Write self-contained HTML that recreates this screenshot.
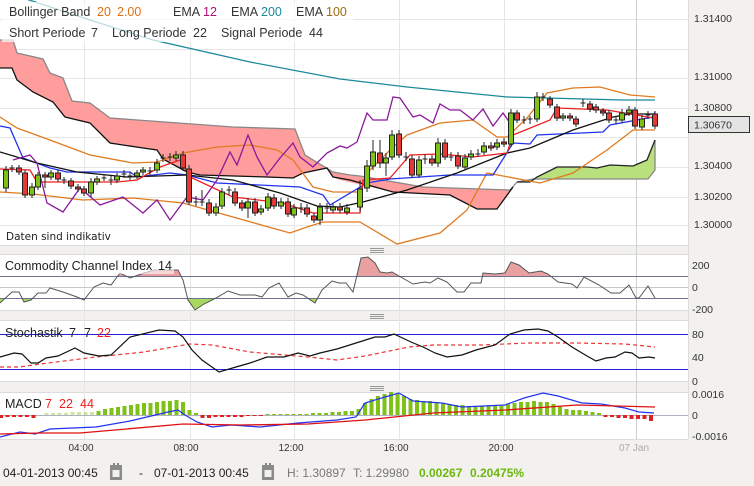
<!DOCTYPE html>
<html><head><meta charset="utf-8"><style>
html,body{margin:0;padding:0;background:#f2f1ed;}
body{width:754px;height:486px;overflow:hidden;position:relative;font-family:"Liberation Sans",sans-serif;}
svg{position:absolute;left:0;top:0;}
text{white-space:pre;}
</style></head><body>
<svg width="754" height="486" viewBox="0 0 754 486" xmlns="http://www.w3.org/2000/svg" font-family="Liberation Sans, sans-serif" xml:space="preserve">
<rect width="754" height="486" fill="#f2f1ed"/>
<rect x="0" y="0" width="688" height="245" fill="#fff"/>
<rect x="0" y="254" width="688" height="56" fill="#fff"/>
<rect x="0" y="320" width="688" height="61" fill="#fff"/>
<rect x="0" y="392" width="688" height="47" fill="#fff"/>
<g stroke="#dcdcdc" stroke-width="1">
<line x1="688.5" y1="0" x2="688.5" y2="439"/>
<line x1="0" y1="245.5" x2="688" y2="245.5"/>
<line x1="0" y1="254.5" x2="688" y2="254.5"/><line x1="0" y1="310.5" x2="688" y2="310.5"/>
<line x1="0" y1="320.5" x2="688" y2="320.5"/><line x1="0" y1="381.5" x2="688" y2="381.5"/>
<line x1="0" y1="392.5" x2="688" y2="392.5"/><line x1="0" y1="439.5" x2="688" y2="439.5"/>
</g>
<g stroke="#e6e6e6" stroke-width="1">
<line x1="0" y1="19.5" x2="688" y2="19.5"/><line x1="0" y1="49.5" x2="688" y2="49.5"/>
<line x1="0" y1="78.5" x2="688" y2="78.5"/><line x1="0" y1="108.5" x2="688" y2="108.5"/>
<line x1="0" y1="137.5" x2="688" y2="137.5"/><line x1="0" y1="167.5" x2="688" y2="167.5"/>
<line x1="0" y1="197.5" x2="688" y2="197.5"/><line x1="0" y1="225.5" x2="688" y2="225.5"/>
<line x1="84.5" y1="0" x2="84.5" y2="439"/><line x1="190.5" y1="0" x2="190.5" y2="439"/>
<line x1="294.5" y1="0" x2="294.5" y2="439"/><line x1="399.5" y1="0" x2="399.5" y2="439"/>
<line x1="504.5" y1="0" x2="504.5" y2="439"/>
</g>
<line x1="636.5" y1="0" x2="636.5" y2="439" stroke="#d0d0d0"/>
<g stroke="#999" stroke-width="1">
<line x1="370" y1="248.5" x2="384" y2="248.5"/><line x1="370" y1="250.5" x2="384" y2="250.5"/><line x1="370" y1="252.5" x2="384" y2="252.5"/>
<line x1="370" y1="314.5" x2="384" y2="314.5"/><line x1="370" y1="316.5" x2="384" y2="316.5"/><line x1="370" y1="318.5" x2="384" y2="318.5"/>
<line x1="370" y1="386.5" x2="384" y2="386.5"/><line x1="370" y1="388.5" x2="384" y2="388.5"/><line x1="370" y1="390.5" x2="384" y2="390.5"/>
</g>

<polygon fill="#ff9c9c" points="0,40 13,40 17,53 43,59 50,73 63,78 72,101 90,103 110,118 233,127 295,129 305,155 333,172 350,175 360,176 423,187 510,190 517,182 513,187 497,209 477,209 450,195 393,192 340,180 333,177 327,168 303,173 293,178 267,177 200,175 187,172 163,159 157,150 143,148 110,143 90,123 65,117 53,102 33,92 17,80 12,68 0,68"/>
<polyline fill="none" stroke="#888" stroke-width="1.3" points="0,40 13,40 17,53 43,59 50,73 63,78 72,101 90,103 110,118 233,127 295,129 305,155 333,172 350,175 360,176 423,187 510,190 517,182"/>
<polygon fill="#b8e07c" points="517,182 530,182 537,177 557,167 587,167 597,168 610,165 633,166 647,160 655,140 655,170 648,179 533,179"/>
<polyline fill="none" stroke="#888" stroke-width="1.3" points="517,182 533,179 648,179 655,170 655,140"/>
<polyline fill="none" stroke="#222" stroke-width="1.3" points="517,182 530,182 537,177 557,167 587,167 597,168 610,165 633,166 647,160 655,140"/>
<polyline fill="none" stroke="#111" stroke-width="1.3" points="0,68 12,68 17,80 33,92 53,102 65,117 90,123 110,143 143,148 157,150 163,159 187,172 200,175 267,177 293,178 303,173 327,168 333,177 350,180 393,192 450,195 477,209 497,209 513,187"/>
<polyline fill="none" stroke="#1a8a9a" stroke-width="1.3" points="20,-3 90,20 153,40 250,62 340,79 407,87 507,97 623,100 655,100"/>
<polyline fill="none" stroke="#e07a20" stroke-width="1.3" points="0,117 17,128 50,140 90,155 133,163 157,162 183,153 217,147 250,145 277,150 293,160 313,187 333,192 360,192 367,173 393,147 407,135 440,123 473,120 497,137 507,137 527,118 547,93 573,88 600,87 630,95 655,97"/>
<polyline fill="none" stroke="#e07a20" stroke-width="1.3" points="0,192 33,194 83,200 133,198 183,203 233,217 290,233 307,227 323,222 360,222 397,244 440,233 467,210 487,173 540,183 573,173 607,150 633,130 655,130"/>
<polyline fill="none" stroke="#2233ee" stroke-width="1.3" points="0,126 10,128 23,158 50,168 67,172 130,172 137,177 170,173 187,175 217,183 300,187 323,195 330,205 367,183 390,179 450,175 493,175 513,143 530,144 537,135 603,132 610,125 653,117 655,112"/>
<polyline fill="none" stroke="#111" stroke-width="1.3" points="0,152 37,163 77,172 127,177 187,175 233,180 280,193 317,206 340,207 363,202 407,190 457,173 507,153 530,148 573,130 613,117 630,114 655,114"/>
<polyline fill="none" stroke="#ee2020" stroke-width="1.3" points="0,169 30,170 37,182 117,182 137,180 160,167 180,160 190,177 233,197 283,203 313,213 340,213 360,213 363,180 390,178 410,155 440,154 473,157 507,153 513,135 550,120 557,108 607,110 653,118"/>
<polyline fill="none" stroke="#8a1a9a" stroke-width="1.3" points="13,160 30,155 37,163 47,203 63,212 80,188 100,205 123,197 143,213 157,200 170,220 187,197 203,200 217,180 230,152 237,165 248,135 257,157 267,175 280,158 293,143 300,157 313,167 327,153 340,146 347,148 357,142 367,113 373,120 387,120 393,97 400,98 413,117 420,115 433,123 440,104 450,110 460,110 473,120 483,109 493,126 503,113 510,123"/>

<g stroke="#222" stroke-width="1">
<g fill="#7ec217">
<line x1="6" y1="166" x2="6" y2="192"/><rect x="3.5" y="170" width="5" height="18"/>
<line x1="32" y1="183" x2="32" y2="198"/><rect x="29.5" y="187" width="5" height="8"/>
<line x1="38" y1="172" x2="38" y2="190"/><rect x="35.5" y="175" width="5" height="12"/>
<line x1="51" y1="170" x2="51" y2="180"/><rect x="48.5" y="173" width="5" height="4"/>
<line x1="91" y1="178" x2="91" y2="197"/><rect x="88.5" y="182" width="5" height="11"/>
<line x1="97" y1="176" x2="97" y2="185"/><rect x="94.5" y="179" width="5" height="3"/>
<line x1="117" y1="173" x2="117" y2="183"/><rect x="114.5" y="176" width="5" height="4"/>
<line x1="137" y1="170" x2="137" y2="179"/><rect x="134.5" y="173" width="5" height="3"/>
<line x1="143" y1="167" x2="143" y2="175"/><rect x="140.5" y="170" width="5" height="2"/>
<line x1="157" y1="159" x2="157" y2="173"/><rect x="154.5" y="163" width="5" height="7"/>
<line x1="176" y1="151" x2="176" y2="161"/><rect x="173.5" y="155" width="5" height="3"/>
<line x1="216" y1="203" x2="216" y2="216"/><rect x="213.5" y="207" width="5" height="6"/>
<line x1="222" y1="188" x2="222" y2="209"/><rect x="219.5" y="192" width="5" height="14"/>
<line x1="248" y1="198" x2="248" y2="218"/><rect x="245.5" y="202" width="5" height="6"/>
<line x1="261" y1="205" x2="261" y2="215"/><rect x="258.5" y="209" width="5" height="3"/>
<line x1="268" y1="193" x2="268" y2="211"/><rect x="265.5" y="197" width="5" height="11"/>
<line x1="281" y1="198" x2="281" y2="209"/><rect x="278.5" y="202" width="5" height="4"/>
<line x1="294" y1="204" x2="294" y2="218"/><rect x="291.5" y="208" width="5" height="7"/>
<line x1="320" y1="203" x2="320" y2="225"/><rect x="317.5" y="207" width="5" height="13"/>
<line x1="333" y1="203" x2="333" y2="213"/><rect x="330.5" y="207" width="5" height="3"/>
<line x1="347" y1="204" x2="347" y2="215"/><rect x="344.5" y="208" width="5" height="4"/>
<line x1="360" y1="180" x2="360" y2="212"/><rect x="357.5" y="189" width="5" height="18"/>
<line x1="367" y1="160" x2="367" y2="192"/><rect x="364.5" y="166" width="5" height="22"/>
<line x1="373" y1="140" x2="373" y2="170"/><rect x="370.5" y="152" width="5" height="14"/>
<line x1="386" y1="153" x2="386" y2="176"/><rect x="383.5" y="158" width="5" height="5"/>
<line x1="392" y1="130" x2="392" y2="160"/><rect x="389.5" y="135" width="5" height="22"/>
<line x1="419" y1="156" x2="419" y2="178"/><rect x="416.5" y="160" width="5" height="15"/>
<line x1="438" y1="138" x2="438" y2="167"/><rect x="435.5" y="143" width="5" height="20"/>
<line x1="465" y1="154" x2="465" y2="170"/><rect x="462.5" y="158" width="5" height="9"/>
<line x1="471" y1="150" x2="471" y2="160"/><rect x="468.5" y="154" width="5" height="3"/>
<line x1="484" y1="142" x2="484" y2="155"/><rect x="481.5" y="146" width="5" height="6"/>
<line x1="497" y1="139" x2="497" y2="150"/><rect x="494.5" y="143" width="5" height="4"/>
<line x1="511" y1="109" x2="511" y2="147"/><rect x="508.5" y="113" width="5" height="31"/>
<line x1="537" y1="92" x2="537" y2="122"/><rect x="534.5" y="97" width="5" height="22"/>
<line x1="563" y1="113" x2="563" y2="121"/><rect x="560.5" y="116" width="5" height="2"/>
<line x1="622" y1="109" x2="622" y2="123"/><rect x="619.5" y="113" width="5" height="7"/>
<line x1="629" y1="106" x2="629" y2="116"/><rect x="626.5" y="110" width="5" height="3"/>
<line x1="642" y1="115" x2="642" y2="130"/><rect x="639.5" y="119" width="5" height="8"/>
</g>
<g fill="#e53935">
<line x1="19" y1="165" x2="19" y2="175"/><rect x="16.5" y="168" width="5" height="4"/>
<line x1="25" y1="170" x2="25" y2="198"/><rect x="22.5" y="173" width="5" height="22"/>
<line x1="45" y1="172" x2="45" y2="188"/><rect x="42.5" y="175" width="5" height="2"/>
<line x1="58" y1="170" x2="58" y2="182"/><rect x="55.5" y="173" width="5" height="6"/>
<line x1="71" y1="178" x2="71" y2="189"/><rect x="68.5" y="181" width="5" height="5"/>
<line x1="78" y1="184" x2="78" y2="192"/><rect x="75.5" y="187" width="5" height="2"/>
<line x1="84" y1="186" x2="84" y2="196"/><rect x="81.5" y="189" width="5" height="4"/>
<line x1="183" y1="151" x2="183" y2="171"/><rect x="180.5" y="155" width="5" height="13"/>
<line x1="189" y1="165" x2="189" y2="205"/><rect x="186.5" y="169" width="5" height="33"/>
<line x1="209" y1="199" x2="209" y2="216"/><rect x="206.5" y="203" width="5" height="10"/>
<line x1="235" y1="188" x2="235" y2="206"/><rect x="232.5" y="192" width="5" height="11"/>
<line x1="242" y1="200" x2="242" y2="211"/><rect x="239.5" y="203" width="5" height="5"/>
<line x1="255" y1="198" x2="255" y2="216"/><rect x="252.5" y="202" width="5" height="11"/>
<line x1="274" y1="194" x2="274" y2="209"/><rect x="271.5" y="198" width="5" height="8"/>
<line x1="288" y1="198" x2="288" y2="217"/><rect x="285.5" y="202" width="5" height="12"/>
<line x1="307" y1="204" x2="307" y2="217"/><rect x="304.5" y="208" width="5" height="6"/>
<line x1="314" y1="213" x2="314" y2="223"/><rect x="311.5" y="216" width="5" height="4"/>
<line x1="340" y1="203" x2="340" y2="213"/><rect x="337.5" y="207" width="5" height="3"/>
<line x1="380" y1="140" x2="380" y2="168"/><rect x="377.5" y="153" width="5" height="10"/>
<line x1="399" y1="130" x2="399" y2="158"/><rect x="396.5" y="134" width="5" height="21"/>
<line x1="412" y1="155" x2="412" y2="178"/><rect x="409.5" y="159" width="5" height="16"/>
<line x1="432" y1="155" x2="432" y2="166"/><rect x="429.5" y="159" width="5" height="4"/>
<line x1="445" y1="139" x2="445" y2="160"/><rect x="442.5" y="143" width="5" height="14"/>
<line x1="458" y1="152" x2="458" y2="169"/><rect x="455.5" y="156" width="5" height="10"/>
<line x1="491" y1="142" x2="491" y2="151"/><rect x="488.5" y="146" width="5" height="2"/>
<line x1="504" y1="138" x2="504" y2="147"/><rect x="501.5" y="142" width="5" height="2"/>
<line x1="517" y1="110" x2="517" y2="123"/><rect x="514.5" y="113" width="5" height="7"/>
<line x1="550" y1="96" x2="550" y2="108"/><rect x="547.5" y="99" width="5" height="6"/>
<line x1="557" y1="104" x2="557" y2="121"/><rect x="554.5" y="107" width="5" height="11"/>
<line x1="570" y1="113" x2="570" y2="121"/><rect x="567.5" y="116" width="5" height="2"/>
<line x1="576" y1="116" x2="576" y2="127"/><rect x="573.5" y="119" width="5" height="5"/>
<line x1="590" y1="101" x2="590" y2="112"/><rect x="587.5" y="104" width="5" height="5"/>
<line x1="596" y1="104" x2="596" y2="113"/><rect x="593.5" y="107" width="5" height="3"/>
<line x1="603" y1="108" x2="603" y2="116"/><rect x="600.5" y="111" width="5" height="2"/>
<line x1="609" y1="110" x2="609" y2="123"/><rect x="606.5" y="113" width="5" height="7"/>
<line x1="635" y1="107" x2="635" y2="129"/><rect x="632.5" y="110" width="5" height="16"/>
<line x1="655" y1="111" x2="655" y2="129"/><rect x="652.5" y="114" width="5" height="12"/>
</g>
<g fill="none">
<line x1="12" y1="165" x2="12" y2="172"/><line x1="9.5" y1="168" x2="14.5" y2="168"/>
<line x1="64" y1="177" x2="64" y2="184"/><line x1="61.5" y1="180" x2="66.5" y2="180"/>
<line x1="104" y1="175" x2="104" y2="181"/><line x1="101.5" y1="178" x2="106.5" y2="178"/>
<line x1="111" y1="176" x2="111" y2="185"/><line x1="108.5" y1="180" x2="113.5" y2="180"/>
<line x1="124" y1="170" x2="124" y2="178"/><line x1="121.5" y1="174" x2="126.5" y2="174"/>
<line x1="130" y1="172" x2="130" y2="180"/><line x1="127.5" y1="176" x2="132.5" y2="176"/>
<line x1="150" y1="167" x2="150" y2="175"/><line x1="147.5" y1="171" x2="152.5" y2="171"/>
<line x1="163" y1="154" x2="163" y2="162"/><line x1="160.5" y1="158" x2="165.5" y2="158"/>
<line x1="170" y1="153" x2="170" y2="161"/><line x1="167.5" y1="157" x2="172.5" y2="157"/>
<line x1="196" y1="196" x2="196" y2="206"/><line x1="193.5" y1="202" x2="198.5" y2="202"/>
<line x1="202" y1="190" x2="202" y2="206"/><line x1="199.5" y1="202" x2="204.5" y2="202"/>
<line x1="229" y1="186" x2="229" y2="195"/><line x1="226.5" y1="190" x2="231.5" y2="190"/>
<line x1="301" y1="203" x2="301" y2="213"/><line x1="298.5" y1="208" x2="303.5" y2="208"/>
<line x1="327" y1="203" x2="327" y2="213"/><line x1="324.5" y1="208" x2="329.5" y2="208"/>
<line x1="406" y1="152" x2="406" y2="161"/><line x1="403.5" y1="157" x2="408.5" y2="157"/>
<line x1="425" y1="154" x2="425" y2="164"/><line x1="422.5" y1="159" x2="427.5" y2="159"/>
<line x1="451" y1="152" x2="451" y2="161"/><line x1="448.5" y1="157" x2="453.5" y2="157"/>
<line x1="478" y1="149" x2="478" y2="157"/><line x1="475.5" y1="154" x2="480.5" y2="154"/>
<line x1="524" y1="116" x2="524" y2="124"/><line x1="521.5" y1="120" x2="526.5" y2="120"/>
<line x1="530" y1="116" x2="530" y2="124"/><line x1="527.5" y1="119" x2="532.5" y2="119"/>
<line x1="543" y1="93" x2="543" y2="101"/><line x1="540.5" y1="97" x2="545.5" y2="97"/>
<line x1="583" y1="99" x2="583" y2="107"/><line x1="580.5" y1="103" x2="585.5" y2="103"/>
<line x1="616" y1="116" x2="616" y2="124"/><line x1="613.5" y1="120" x2="618.5" y2="120"/>
<line x1="648" y1="111" x2="648" y2="119"/><line x1="645.5" y1="115" x2="650.5" y2="115"/>
</g>
</g>

<rect x="2" y="2" width="352" height="40" fill="#fff" opacity="0.7"/>
<g font-size="12.5" fill="#333">
<text x="9" y="16">Bollinger Band</text><text x="97" y="16" fill="#e07010">20</text><text x="117" y="16" fill="#e07010">2.00</text>
<text x="173" y="16">EMA</text><text x="203" y="16" fill="#b0106f">12</text>
<text x="231" y="16">EMA</text><text x="261" y="16" fill="#1a8a9a">200</text>
<text x="296" y="16">EMA</text><text x="326" y="16" fill="#a06a10">100</text>
<text x="9" y="37">Short Periode</text><text x="91" y="37">7</text>
<text x="112" y="37">Long Periode</text><text x="193" y="37">22</text>
<text x="221" y="37">Signal Periode</text><text x="309" y="37">44</text>
</g>
<text x="6" y="240" font-size="10.5" fill="#222" font-family="DejaVu Sans, sans-serif">Daten sind indikativ</text>

<g font-size="10.5" fill="#333">
<text x="694" y="22">1.31400</text>
<text x="694" y="80">1.31000</text>
<text x="694" y="111">1.30800</text>
<text x="694" y="169">1.30400</text>
<text x="694" y="200">1.30200</text>
<text x="694" y="228">1.30000</text>
</g>
<rect x="688.5" y="116.5" width="61" height="16" fill="#e4e4e4" stroke="#333"/>
<text x="694" y="128.5" font-size="10.5" fill="#333">1.30670</text>

<clipPath id="cAbove"><rect x="0" y="254" width="688" height="22"/></clipPath>
<clipPath id="cBelow"><rect x="0" y="298" width="688" height="12"/></clipPath>
<g clip-path="url(#cAbove)"><polygon fill="#e8a0a0" points="0,303 12,292 19,292 24,302 31,300 38,293 46,293 50,288 63,292 77,297 84,300 94,287 103,283 111,285 120,273 130,278 144,273 154,270 178,270 183,280 188,300 195,310 204,304 216,298 228,291 240,295 255,295 262,297 269,288 279,283 288,297 296,293 303,295 315,303 322,290 332,281 339,283 346,283 353,292 361,258 368,257 375,263 380,272 387,273 392,272 399,276 413,284 425,282 430,283 438,278 447,282 457,292 464,292 471,283 481,283 483,273 495,274 505,273 511,262 519,265 529,273 541,271 548,274 558,282 572,284 577,288 584,277 599,285 611,293 620,293 629,285 636,298 639,298 648,286 655,298 655,276 0,276"/></g>
<g clip-path="url(#cBelow)"><polygon fill="#a8d860" points="0,303 12,292 19,292 24,302 31,300 38,293 46,293 50,288 63,292 77,297 84,300 94,287 103,283 111,285 120,273 130,278 144,273 154,270 178,270 183,280 188,300 195,310 204,304 216,298 228,291 240,295 255,295 262,297 269,288 279,283 288,297 296,293 303,295 315,303 322,290 332,281 339,283 346,283 353,292 361,258 368,257 375,263 380,272 387,273 392,272 399,276 413,284 425,282 430,283 438,278 447,282 457,292 464,292 471,283 481,283 483,273 495,274 505,273 511,262 519,265 529,273 541,271 548,274 558,282 572,284 577,288 584,277 599,285 611,293 620,293 629,285 636,298 639,298 648,286 655,298 655,298 0,298"/></g>
<line x1="0" y1="276.5" x2="688" y2="276.5" stroke="#707090"/>
<line x1="0" y1="287.5" x2="688" y2="287.5" stroke="#c8c8c8"/>
<line x1="0" y1="298.5" x2="688" y2="298.5" stroke="#707090"/>
<polyline fill="none" stroke="#555" stroke-width="1" points="0,303 12,292 19,292 24,302 31,300 38,293 46,293 50,288 63,292 77,297 84,300 94,287 103,283 111,285 120,273 130,278 144,273 154,270 178,270 183,280 188,300 195,310 204,304 216,298 228,291 240,295 255,295 262,297 269,288 279,283 288,297 296,293 303,295 315,303 322,290 332,281 339,283 346,283 353,292 361,258 368,257 375,263 380,272 387,273 392,272 399,276 413,284 425,282 430,283 438,278 447,282 457,292 464,292 471,283 481,283 483,273 495,274 505,273 511,262 519,265 529,273 541,271 548,274 558,282 572,284 577,288 584,277 599,285 611,293 620,293 629,285 636,298 639,298 648,286 655,298"/>
<rect x="2" y="257" width="172" height="17" fill="#fff" opacity="0.6"/>
<text x="5" y="270" font-size="12.5" fill="#222">Commodity Channel Index</text><text x="158" y="270" font-size="12.5" fill="#222">14</text>
<g font-size="10.5" fill="#333"><text x="692" y="269">200</text><text x="692" y="291">0</text><text x="692" y="313">-200</text></g>

<line x1="0" y1="334.5" x2="688" y2="334.5" stroke="#2222dd"/>
<line x1="0" y1="369.5" x2="688" y2="369.5" stroke="#2222dd"/>
<polyline fill="none" stroke="#ee3333" stroke-width="1.2" stroke-dasharray="4,3" points="0,367 19,367 48,363 96,357 144,352 190,344 212,345 250,352 308,357 337,360 365,356 409,347 433,345 481,345 529,343 577,343 625,344 655,347"/>
<polyline fill="none" stroke="#111" stroke-width="1.2" points="0,357 14,353 22,354 31,363 38,363 46,358 58,356 75,348 84,353 99,356 111,355 130,337 159,330 175,331 183,337 192,350 202,360 219,372 236,367 250,363 267,357 284,357 298,353 310,356 320,353 337,349 356,343 375,337 385,337 394,334 411,342 423,347 435,353 447,357 462,355 476,350 495,345 510,334 524,330 538,329 548,331 558,337 572,347 587,356 596,361 606,358 615,357 625,352 632,353 639,358 649,357 655,358"/>
<text x="5" y="337" font-size="12.5" fill="#222">Stochastik</text><text x="69" y="337" font-size="12.5" fill="#222">7</text><text x="84" y="337" font-size="12.5" fill="#222">7</text><text x="97" y="337" font-size="12.5" fill="#ee2020">22</text>
<g font-size="10.5" fill="#333"><text x="692" y="338">80</text><text x="692" y="361">40</text><text x="692" y="385">0</text></g>

<line x1="0" y1="415.5" x2="688" y2="415.5" stroke="#b0b0c0"/>
<g fill="#7ec217">
<rect x="44.5" y="412" width="4" height="3" opacity="0.4"/><rect x="51" y="412" width="4" height="3" opacity="0.4"/><rect x="57.5" y="412" width="4" height="3" opacity="0.4"/><rect x="64" y="412" width="4" height="3" opacity="0.4"/><rect x="70.5" y="412" width="4" height="3" opacity="0.4"/><rect x="77" y="412" width="4" height="3" opacity="0.4"/><rect x="83.5" y="412" width="4" height="3" opacity="0.4"/><rect x="90" y="412" width="4" height="3" opacity="0.4"/>
<rect x="96.5" y="411" width="4" height="4"/><rect x="103" y="409" width="4" height="6"/><rect x="109.5" y="408" width="4" height="7"/><rect x="116" y="407" width="4" height="8"/><rect x="122.5" y="406" width="4" height="9"/><rect x="129" y="405" width="4" height="10"/><rect x="135.5" y="404" width="4" height="11"/><rect x="142" y="403" width="4" height="12"/><rect x="148.5" y="403" width="4" height="12"/><rect x="155" y="402" width="4" height="13"/><rect x="161.5" y="401" width="4" height="14"/><rect x="168" y="401" width="4" height="14"/><rect x="174.5" y="400" width="4" height="15"/><rect x="181" y="402" width="4" height="13"/><rect x="187.5" y="410" width="4" height="5"/><rect x="194" y="413" width="4" height="2"/>
<rect x="265.5" y="414" width="4" height="1"/><rect x="272" y="414" width="4" height="1"/><rect x="278.5" y="414" width="4" height="1"/><rect x="285" y="414" width="4" height="1"/><rect x="291.5" y="414" width="4" height="1"/><rect x="298" y="414" width="4" height="1"/><rect x="304.5" y="414" width="4" height="1"/><rect x="311" y="413" width="4" height="2"/><rect x="317.5" y="413" width="4" height="2"/><rect x="324" y="413" width="4" height="2"/><rect x="330.5" y="412" width="4" height="3"/><rect x="337" y="412" width="4" height="3"/><rect x="343.5" y="411" width="4" height="4"/><rect x="350" y="411" width="4" height="4"/><rect x="356.5" y="409" width="4" height="6"/><rect x="363" y="403" width="4" height="12"/><rect x="369.5" y="399" width="4" height="16"/><rect x="376" y="396" width="4" height="19"/><rect x="382.5" y="394" width="4" height="21"/><rect x="389" y="392" width="4" height="23"/><rect x="395.5" y="394" width="4" height="21"/><rect x="402" y="396" width="4" height="19"/><rect x="408.5" y="399" width="4" height="16"/><rect x="415" y="400" width="4" height="15"/><rect x="421.5" y="401" width="4" height="14"/><rect x="428" y="401" width="4" height="14"/><rect x="434.5" y="402" width="4" height="13"/><rect x="441" y="403" width="4" height="12"/><rect x="447.5" y="404" width="4" height="11"/><rect x="454" y="405" width="4" height="10"/><rect x="460.5" y="405" width="4" height="10"/><rect x="467" y="406" width="4" height="9"/><rect x="473.5" y="406" width="4" height="9"/><rect x="480" y="406" width="4" height="9"/><rect x="486.5" y="406" width="4" height="9"/><rect x="493" y="406" width="4" height="9"/><rect x="499.5" y="406" width="4" height="9"/><rect x="506" y="404" width="4" height="11"/><rect x="512.5" y="403" width="4" height="12"/><rect x="519" y="402" width="4" height="13"/><rect x="525.5" y="402" width="4" height="13"/><rect x="532" y="401" width="4" height="14"/><rect x="538.5" y="402" width="4" height="13"/><rect x="545" y="402" width="4" height="13"/><rect x="551.5" y="404" width="4" height="11"/><rect x="558" y="406" width="4" height="9"/><rect x="564.5" y="409" width="4" height="6"/><rect x="571" y="410" width="4" height="5"/><rect x="577.5" y="410" width="4" height="5"/><rect x="584" y="411" width="4" height="4"/><rect x="590.5" y="412" width="4" height="3"/><rect x="597" y="413" width="4" height="2"/>
</g>
<g fill="#e02020">
<rect x="-1" y="415" width="4" height="3"/><rect x="5.5" y="415" width="4" height="2"/><rect x="12" y="415" width="4" height="2"/><rect x="18.5" y="415" width="4" height="2"/><rect x="25" y="415" width="4" height="2"/><rect x="31.5" y="415" width="4" height="3"/>
<rect x="200.5" y="415" width="4" height="3"/><rect x="207" y="415" width="4" height="3"/><rect x="213.5" y="415" width="4" height="2"/><rect x="220" y="415" width="4" height="2"/><rect x="226.5" y="415" width="4" height="2"/><rect x="233" y="415" width="4" height="2"/><rect x="239.5" y="415" width="4" height="2"/><rect x="246" y="415" width="4" height="1"/><rect x="252.5" y="415" width="4" height="1"/><rect x="259" y="415" width="4" height="1"/>
<rect x="603.5" y="415" width="4" height="2"/><rect x="610" y="415" width="4" height="2"/><rect x="616.5" y="415" width="4" height="3"/><rect x="623" y="415" width="4" height="3"/><rect x="629.5" y="415" width="4" height="4"/><rect x="636" y="415" width="4" height="4"/><rect x="642.5" y="415" width="4" height="4"/><rect x="649" y="415" width="4" height="6"/>
</g>
<polyline fill="none" stroke="#2233ee" stroke-width="1.2" points="0,437 20,432 35,434 50,429 96,427 130,421 168,412 178,410 185,415 197,422 212,427 231,425 260,427 298,423 337,420 356,417 365,403 385,397 399,393 413,401 442,403 462,407 505,405 524,398 543,393 558,396 582,403 601,404 625,408 639,412 654,413"/>
<polyline fill="none" stroke="#dd1111" stroke-width="1.3" points="0,434 40,433 80,433 115,430 183,424 240,425 308,424 365,420 433,413 505,410 577,405 655,407"/>
<rect x="2" y="394" width="66" height="19" fill="#fff" opacity="0.85"/>
<text x="5" y="408" font-size="12.5" fill="#222">MACD</text><text x="45" y="408" font-size="12.5" fill="#ee2020">7</text><text x="59" y="408" font-size="12.5" fill="#ee2020">22</text><text x="80" y="408" font-size="12.5" fill="#ee2020">44</text>
<g font-size="10.5" fill="#333"><text x="692" y="398">0.0016</text><text x="692" y="419">0</text><text x="692" y="440">-0.0016</text></g>

<g font-size="10" fill="#333" text-anchor="middle">
<text x="81" y="451">04:00</text><text x="186" y="451">08:00</text><text x="291" y="451">12:00</text>
<text x="396" y="451">16:00</text><text x="501" y="451">20:00</text><text x="634" y="451" fill="#aaa">07 Jan</text>
</g>

<g font-size="12" fill="#222">
<text x="3" y="477">04-01-2013 00:45</text>
<text x="139" y="477">-</text>
<text x="154" y="477">07-01-2013 00:45</text>
<text x="287" y="477" fill="#777">H: 1.30897</text>
<text x="353" y="477" fill="#777">T: 1.29980</text>
<text x="419" y="477" fill="#6cb70f" font-weight="bold">0.00267</text>
<text x="470" y="477" fill="#6cb70f" font-weight="bold">0.20475%</text>
</g>
<g>
<rect x="110" y="465" width="12" height="15" fill="#8a8a8a"/><rect x="112.5" y="470" width="7" height="7" fill="#f2f1ed"/><rect x="113" y="463" width="2" height="4" fill="#8a8a8a"/><rect x="117" y="463" width="2" height="4" fill="#8a8a8a"/>
<rect x="262" y="465" width="12" height="15" fill="#8a8a8a"/><rect x="264.5" y="470" width="7" height="7" fill="#f2f1ed"/><rect x="265" y="463" width="2" height="4" fill="#8a8a8a"/><rect x="269" y="463" width="2" height="4" fill="#8a8a8a"/>
</g>
</svg>
</body></html>
